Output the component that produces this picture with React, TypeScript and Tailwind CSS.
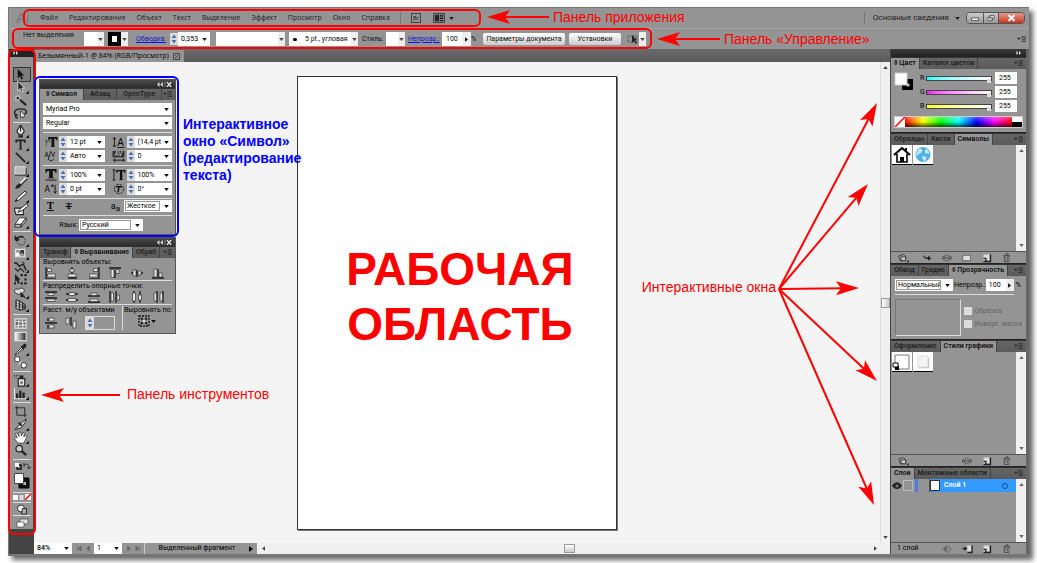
import type { ReactNode } from "react";
import { clsx } from "clsx";

const menu = ["Файл", "Редактирование", "Объект", "Текст", "Выделение", "Эффект", "Просмотр", "Окно", "Справка"];

const light = "#e4e4e4";
const dark = "#222";

type Tool = { name: string; more?: boolean; active?: boolean; art: ReactNode };

const toolGroups: Tool[][] = [
  [
    { name: "Выделение", active: true, art: <path d="M5 1v10l2.500-2.200 1.500 3.700 1.600-.8-1.600-3.500h3z" fill="#111" /> },
    { name: "Прямое выделение", more: true, art: <path d="M5 0v10.500l2.500-2.200 1.500 3.700 1.800-.8-1.600-3.500h3z" fill={dark} stroke={light} strokeWidth=".9" /> },
    { name: "Волшебная палочка", art: <g stroke={dark}><path d="M7 6l7 6" strokeWidth="2.200" /><path d="M5 1v7M1.500 4.500h7M2.500 2l5 5M7.500 2l-5 5" stroke="#ddd" strokeWidth=".9" /><circle cx="5" cy="4.500" r="1" fill={dark} /></g> },
    { name: "Лассо", art: <g fill="none" stroke={dark} strokeWidth="1.500"><path d="M5 9C-1 8 1 2 8 2s8 4 4 6" /><path d="M4 8c-3 1-1 4 1 4" /><path d="M8 4v8l2-2 1 2 1.500-3z" fill={light} strokeWidth=".7" /></g> },
  ],
  [
    { name: "Перо", more: true, art: <g><path d="M8 0L4 6.500 6 10h4l2-3.500z" fill={light} stroke={dark} strokeWidth="1.200" /><path d="M8 2v5" stroke={dark} strokeWidth="1.200" /><path d="M5.500 11h5v2.500h-5z" fill={dark} /></g> },
    { name: "Текст", more: true, art: <path d="M2.500 1.500h11v4h-1L11.500 3.500H9V11l1.500 1.500H5.500L7 11V3.500H4.500l-1 2h-1z" fill={dark} /> },
    { name: "Отрезок линии", more: true, art: <path d="M3 2l10 10" stroke={dark} strokeWidth="1.800" /> },
    { name: "Прямоугольник", more: true, art: <g><path d="M2 3h11v8H2z" fill="#bbb" stroke={light} /><path d="M2 12h12V4" fill="none" stroke={dark} /></g> },
    { name: "Кисть", art: <g><path d="M14 1L7 8" stroke={light} strokeWidth="2.500" /><path d="M15 2L8 9" stroke={dark} strokeWidth="1.300" /><path d="M7 6.500L4 9l-2 3.500c3 0 6-1 7-4z" fill={dark} /></g> },
    { name: "Карандаш", more: true, art: <g><path d="M13 1L5 8l-3 4.500 4.500-2 8-7z" fill="#f4f4f4" stroke={dark} /><path d="M2 12.500l3-1-1.500-2z" fill={dark} /></g> },
    { name: "Кисть-клякса", art: <g><path d="M1 5.500h10v7H3z" fill={light} stroke={dark} strokeWidth="1.200" /><path d="M15 .5L8 6l-3 4 5-2 6-5z" fill="#fff" stroke={dark} /></g> },
    { name: "Ластик", more: true, art: <g><path d="M7 2h7L8.500 9H2z" fill="#fff" stroke={dark} strokeWidth=".9" /><path d="M2 9h6.500v3H2zM8.500 9L14 2v3.500L8.500 12z" fill="#bbb" stroke={dark} strokeWidth=".9" /></g> },
  ],
  [
    { name: "Поворот", more: true, art: <g fill="none" stroke={dark}><circle cx="8.500" cy="7.500" r="4.500" strokeDasharray="1.500 1" /><path d="M4 7.500A4.500 4.500 0 0 1 11 3.500" strokeWidth="1.800" /><path d="M2 2v4.500h4.500z" fill={dark} /></g> },
    { name: "Масштаб", more: true, art: <g><path d="M2.500 2.500h10v8h-10z" fill="#999" stroke={light} strokeWidth="1.200" /><path d="M3 6h4v4H3z" fill="#fff" /><path d="M7 7l4-3M11 7.500V4H8" stroke={dark} fill="none" strokeWidth="1.200" /></g> },
    { name: "Деформация", more: true, art: <g fill="none" stroke={dark}><path d="M1 4c4-4 4 5 7 2s4 0 6 5" strokeWidth="1.600" /><path d="M2 9l3 3 3-3 4 4M10 2l2 2" strokeWidth="1.200" /></g> },
    { name: "Свободное трансформирование", art: <g fill={dark}><path d="M2 1l6 6H6l1 4-2 .5L4 8 2 9.500z" /><path d="M8 1h2.500v2.500H8zM12 1h2.500v2.500H12zM12 6h2.500v2H12zM12 10h2.500v2.500H12zM8 10h2.500v2.500H8zM1 10h2v2.500H1z" /></g> },
    { name: "Создание фигур", more: true, art: <g><path d="M2 7C0 4 4 2 6 4c3-4 8 0 5 3-3 3-7 2-9 0z" fill={light} stroke={dark} /><path d="M8 5.500v7l2-1 4 2z" fill={dark} /></g> },
    { name: "Сетка перспективы", more: true, art: <g fill="none" stroke={dark}><path d="M3 1l4 1v10l-4-2zM7 2l6 4v5l-6 1M3 4l10 4M3 7l10 2.500M10 4v7" /><path d="M5 2v8.500M8.500 4v7" stroke={light} /></g> },
  ],
  [
    { name: "Сетка", art: <g><path d="M2 2h12v10H2z" fill="#666" stroke={light} strokeWidth="1.200" /><path d="M2 5c4-2 5 2 12 0M2 9c4 2 7-2 12 0M6 2c2 3-2 6 0 10M10 2c-1 4 2 6 0 10" fill="none" stroke={light} strokeWidth="1.200" /></g> },
    { name: "Градиент", art: <rect x="2" y="2.500" width="12" height="9" fill="url(#toolGrad)" stroke={light} strokeWidth="1.200" /> },
    { name: "Пипетка", more: true, art: <g><path d="M9 5L3 11l-1 2 2-1 6.500-6z" fill="#fff" stroke={dark} /><path d="M8 3.500l2-.5 2-2.500 2.500 1.500-1 3L11.500 6v2z" fill={dark} /></g> },
    { name: "Переход", art: <g><path d="M2 1h5v5H2z" fill="#fff" stroke={dark} strokeWidth=".8" /><path d="M6 6h4v4H6z" fill="#bbb" /><circle cx="11.500" cy="10" r="3" fill="#fff" stroke={dark} /></g> },
  ],
  [
    { name: "Распыление символов", more: true, art: <g><path d="M1 1.500h6M1 3.500h4" stroke={dark} strokeDasharray="1 1" /><path d="M5.500 5h7v8h-7z" fill={light} stroke={dark} strokeWidth="1.200" /><path d="M7 1.500h4V5H7z" fill={dark} /><path d="M7.500 8h3v2.500h-3z" fill="#777" /></g> },
    { name: "Гистограмма", more: true, art: <g><path d="M1.500 1v11.500H14" fill="none" stroke={light} strokeWidth="1.200" /><path d="M3 7h2.500v5H3zM6.500 4H9v8H6.500zM10 6h2.500v6H10z" fill={dark} /></g> },
  ],
  [
    { name: "Монтажная область", art: <path d="M4 3h8.500v8H4zM2 3h2M12.500 11h2M4 1v2M12.500 11v2" fill="none" stroke={dark} /> },
    { name: "Фрагменты", more: true, art: <g><path d="M14 1L8 6l-6 6.500 7-2 4-6z" fill={light} stroke={dark} /><path d="M6 5l3.500 3.500" stroke={dark} strokeWidth="2" /></g> },
    { name: "Рука", more: true, art: <path d="M5 13L1.500 8l1-1.500 2 1L2.500 3 4 2l2.500 4L6 1.500 8 1l1 4.500L10.500 1.500l1.500.5-.5 4.500 2-2L15 5.500 11.500 13z" fill="#fff" stroke={dark} strokeWidth=".7" /> },
    { name: "Лупа", art: <g><circle cx="6.500" cy="5" r="3.500" fill="#ccc" stroke={dark} strokeWidth="1.300" /><path d="M9 7.500l5 4.500" stroke={dark} strokeWidth="2.600" /></g> },
  ],
];

const bars = (d: string) => <path d={d} fill={light} stroke="#333" strokeWidth=".7" />;
const rail = (d: string) => <path d={d} stroke="#1a1a1a" strokeWidth="1.300" fill="none" />;

const alignIcons = [
  { name: "По левому краю", art: <>{rail("M2 1v12h10")}{bars("M3.500 2.500h4v3h-4zM3.500 8h8v3h-8z")}</> },
  { name: "По центру горизонтали", art: <>{rail("M7 0v14M3 12h9")}{bars("M5 3h4v3H5zM3 8h8v3H3z")}</> },
  { name: "По правому краю", art: <>{rail("M12 1v12H2")}{bars("M6.500 2.500h4v3h-4zM2.500 8h8v3h-8z")}</> },
  { name: "По верхнему краю", art: <>{rail("M1 2h12M7 4v8")}{bars("M3 3.500h3v8H3zM8 3.500h3v4H8z")}</> },
  { name: "По центру вертикали", art: <>{rail("M1 7h12M7 4v7")}{bars("M3 4h3v6H3zM8 5h3v4H8z")}</> },
  { name: "По нижнему краю", art: <>{rail("M1 12h12M7 3v8")}{bars("M3 3h3v8H3zM8 7h3v4H8z")}</> },
];
const spreadIcons = [
  { name: "Верхние края", art: <>{rail("M1 2h12M1 8h12")}{bars("M4 3h6v2.500H4zM3 9h8v2.500H3z")}</> },
  { name: "Центры по вертикали", art: <>{rail("M1 4h12M1 10h12")}{bars("M4 2.500h6v3H4zM3 8.500h8v3H3z")}</> },
  { name: "Нижние края", art: <>{rail("M1 6h12M1 12h12")}{bars("M4 3h6v2.500H4zM3 9h8v2.500H3z")}</> },
  { name: "Левые края", art: <>{rail("M2 1v12M8 1v12")}{bars("M3 3h2.500v8H3zM9 5h2.500v5H9z")}</> },
  { name: "Центры по горизонтали", art: <>{rail("M4 1v12M10 1v12")}{bars("M2.500 3h3v8h-3zM8.500 5h3v5h-3z")}</> },
  { name: "Правые края", art: <>{rail("M6 1v12M12 1v12")}{bars("M3 3h2.500v8H3zM9 3h2.500v8H9z")}</> },
];

function IconButton({ name, art }: { name: string; art: ReactNode }) {
  return (
    <button aria-label={name} className="flex">
      <svg viewBox="1 1 12 12" className="h-3 w-3">{art}</svg>
    </button>
  );
}

function Down({ className }: { className?: string }) {
  return (
    <svg viewBox="0 0 6 4" className={clsx("h-[3px] w-[5px] shrink-0", className)}>
      <path d="M0 0h6L3 4z" fill="currentColor" />
    </svg>
  );
}

function Combo({ label, value, className, boxed }: { label: string; value: string; className?: string; boxed?: boolean }) {
  return (
    <div className={clsx("relative flex items-center bg-white", className)}>
      <select aria-label={label} className="h-full w-full min-w-0 appearance-none pr-2 pl-[3px] text-black outline-none">
        <option>{value}</option>
      </select>
      {boxed && <span className="pointer-events-none absolute inset-y-px right-3 left-px border border-[#999]" />}
      <Down className="pointer-events-none absolute right-[3px]" />
    </div>
  );
}

function Spin() {
  return (
    <svg viewBox="0 0 8 12" className="h-3 w-2 shrink-0">
      <rect width="8" height="12" fill="#dcdcdc" />
      <path d="M1.500 5L4 1.500 6.500 5zM1.500 7L4 10.500 6.500 7z" fill="#4a6fb5" />
    </svg>
  );
}

function Field({ label, value, art }: { label: string; value: string; art: ReactNode }) {
  return (
    <div className="flex items-center">
      <svg viewBox="0 0 16 13" className="h-3 w-4 shrink-0">{art}</svg>
      <Spin />
      <Combo label={label} value={value} className="h-3 min-w-0 flex-1" />
    </div>
  );
}

function Flyout() {
  return (
    <button aria-label="Меню панели" className="ml-auto shrink-0 pr-[3px] pl-px">
      <svg viewBox="0 0 10 8" className="h-[7px] w-[9px]">
        <path d="M0 2h4L2 4.500z" fill={dark} />
        <path d="M5 1h5M5 3.500h5M5 6h5" stroke={dark} />
      </svg>
    </button>
  );
}

function Tabs({ items, active, wide }: { items: string[]; active: number; wide?: boolean }) {
  return (
    <div className="flex h-3 items-center border-t border-[#333] bg-gradient-to-b from-[#666] to-[#5a5a5a] text-[7px] font-semibold">
      <div role="tablist" className="flex h-full min-w-0">
        {items.map((t, i) => (
          <button
            key={t}
            role="tab"
            aria-selected={i === active}
            className={clsx(
              "h-full border-r border-[#444] leading-[11px] whitespace-nowrap",
              wide ? "px-[6px]" : "px-[3px]",
              i === active ? "bg-[#949494] text-[#111]" : "text-[#222]"
            )}
          >
            {t}
          </button>
        ))}
      </div>
      <Flyout />
    </div>
  );
}

function FloatHeader() {
  return (
    <div className="flex h-2 items-center justify-end bg-gradient-to-b from-[#4a4a4a] to-[#2c2c2c] pr-[3px]">
      <svg viewBox="0 0 18 6" className="h-[5px] w-[15px]">
        <path d="M3 0L0 3l3 3zM7 0L4 3l3 3z" fill="#ddd" />
        <path d="M9.500 0v6" stroke="#888" />
        <path d="M12 0l5 6M17 0l-5 6" stroke="#eee" strokeWidth="1.500" />
      </svg>
    </div>
  );
}

function Rule({ className }: { className?: string }) {
  return <hr className={clsx("border-0 border-t border-[#ddd]", className)} />;
}

function SymbolPanel() {
  return (
    <section className="w-[137px] border border-[#555] bg-[#949494] text-[7px]">
      <FloatHeader />
      <Tabs items={["◊ Символ", "Абзац", "OpenType"]} active={0} wide />
      <div className="flex flex-col p-[3px]">
        <Combo label="Шрифт" value="Myriad Pro" className="h-3" />
        <Combo label="Начертание" value="Regular" className="mt-[2px] h-3" />
        <Rule className="my-[3px]" />
        <div className="grid grid-cols-2 gap-x-[6px] gap-y-[2px]">
          <Field label="Кегль" value="12 pt" art={<><path d="M5 1h10v3.500h-1l-1-1.500h-1.500v8l1.500 1H7l1.500-1V3H7L6 4.500H5z" fill="#111" /><path d="M2 6h5M3 4v8" stroke={dark} strokeDasharray="1 1" /></>} />
          <Field label="Интерлиньяж" value="(14,4 pt" art={<><text x="6" y="11" fontSize="11">A</text><path d="M3 2v9M1.500 3.500L3 1.500l1.500 2M1.500 10L3 12l1.500-2M6 12.500h8" stroke="#111" fill="none" /></>} />
          <Field label="Кернинг" value="Авто" art={<><text x="1" y="8" fontSize="7">A</text><text x="8" y="8" fontSize="7">V</text><path d="M8 1L5 10l3 2 3-2" fill="none" stroke="#111" strokeWidth=".9" /></>} />
          <Field label="Трекинг" value="0" art={<><path d="M1 1h13v7H1z" fill="#333" /><text x="3" y="7" fontSize="7" fill="#ddd">AV</text><path d="M2 11h12M4 9l-2 2 2 2M12 9l2 2-2 2" stroke="#111" fill="none" /></>} />
        </div>
        <Rule className="my-[3px]" />
        <div className="grid grid-cols-2 gap-x-[6px] gap-y-[2px]">
          <Field label="Масштаб по горизонтали" value="100%" art={<><path d="M2 0h12v4h-1l-1.500-2H10v7l1.500 1h-7L6 9V2H4.500L3 4H2z" fill="#111" /><path d="M2 12h12" stroke="#111" /></>} />
          <Field label="Масштаб по вертикали" value="100%" art={<><path d="M5 1h10v3h-1l-1-1.500h-1.500v8.500l1.500 1H7.500L9 11V2.500H7L6 4H5z" fill="#111" /><path d="M2.500 1v11M1 1h3M1 12h3" stroke="#111" /></>} />
          <Field label="Сдвиг базовой линии" value="0 pt" art={<><text x="1" y="10" fontSize="9">A</text><path d="M8 3h3M9.500 1.500v3M12.500 2v9M11 9l1.500 2L14 9" stroke="#111" fill="none" /></>} />
          <Field label="Поворот символа" value="0°" art={<><circle cx="8" cy="6.500" r="5" fill="none" stroke="#111" strokeDasharray="2 1" /><path d="M5 4h6M8 4l-1 6" stroke="#111" strokeWidth="1.600" /></>} />
        </div>
        <Rule className="mt-[3px] mb-px" />
        <div className="flex items-center">
          <button aria-label="Подчеркнутый" className="ml-1 font-['Liberation_Serif',serif] text-[10px] leading-3 font-bold underline">T</button>
          <button aria-label="Зачеркнутый" className="ml-3 font-['Liberation_Serif',serif] text-[9px] leading-3 font-bold line-through">T</button>
          <span className="mr-1 ml-auto text-[9px] leading-3">a<sub className="text-[8px]">a</sub></span>
          <Combo label="Сглаживание" value="Жесткое" className="h-3 w-12" boxed />
        </div>
        <Rule className="my-[3px]" />
        <label className="flex items-center pl-4">
          <span className="mr-px">Язык:</span>
          <Combo label="Язык" value="Русский" className="h-3 w-16" boxed />
        </label>
      </div>
    </section>
  );
}

function AlignPanel() {
  return (
    <section className="w-[137px] border border-[#555] bg-[#949494] text-[7px]">
      <FloatHeader />
      <Tabs items={["Трансф", "◊ Выравнивание", "Обраб"]} active={1} />
      <div className="flex flex-col px-[3px] pb-[3px]">
        <h3 className="leading-2">Выровнять объекты:</h3>
        <div className="mt-px flex justify-between pr-2 pl-[2px]">{alignIcons.map((i) => <IconButton key={i.name} {...i} />)}</div>
        <Rule className="my-px" />
        <h3 className="leading-2">Распределить опорные точки:</h3>
        <div className="mt-px flex justify-between pr-2 pl-[2px]">{spreadIcons.map((i) => <IconButton key={i.name} {...i} />)}</div>
        <Rule className="my-px" />
        <div className="flex">
          <div className="w-20 border-r border-[#ddd]">
            <h3 className="leading-2 whitespace-nowrap">Расст. м/у объектами</h3>
            <div className="mt-[2px] flex items-center gap-2 pl-[2px]">
              <IconButton name="Интервал по вертикали" art={<>{rail("M1 7h12M4 2v3M4 9v4")}{bars("M5 2h5v3H5zM5 9h5v3H5z")}</>} />
              <IconButton name="Интервал по горизонтали" art={<>{rail("M7 1v9")}{bars("M2 2h3v6H2zM9 5h3v7H9z")}</>} />
              <div className="flex border border-[#ddd]">
                <Spin />
                <input aria-label="Интервал" className="w-5 bg-[#949494]" />
              </div>
            </div>
          </div>
          <div className="min-w-0 flex-1 pl-px">
            <h3 className="leading-2 whitespace-nowrap">Выровнять по:</h3>
            <button aria-label="Выровнять по" className="mt-px ml-[14px] flex items-center gap-px">
              <svg viewBox="0 0 12 12" className="h-3 w-3">
                <path d="M1 1h10v10H1z" fill="none" stroke="#111" strokeWidth="1.300" strokeDasharray="2 1" />
                <path d="M3 3l6 6M9 3l-6 6" stroke="#111" strokeWidth="1.800" />
                <path d="M4.500 4.500h3v3h-3z" fill={light} />
              </svg>
              <Down />
            </button>
          </div>
        </div>
      </div>
    </section>
  );
}

function Toolbar() {
  return (
    <aside className="flex w-[25px] shrink-0 flex-col bg-[#444]">
      <div className="flex h-2 items-center bg-[#222] pl-1">
        <svg viewBox="0 0 8 6" className="h-1 w-[6px]"><path d="M0 0l3 3-3 3zM4 0l3 3-3 3z" fill="#ddd" /></svg>
      </div>
      <div className="mx-px flex flex-col items-center bg-[#949494] pt-[11px]">
        <svg className="absolute h-0 w-0">
          <linearGradient id="toolGrad"><stop stopColor="#fff" /><stop offset="1" stopColor="#222" /></linearGradient>
        </svg>
        {toolGroups.map((group, i) => (
          <div key={i} className="flex flex-col items-center">
            {group.map((t) => (
              <button
                key={t.name}
                aria-label={t.name}
                className={clsx("flex h-[13px] w-4 items-center justify-center", t.active && "bg-[#7d7d7d] outline outline-[#333]")}
              >
                <svg viewBox="1 0 16 14" className="h-[13px] w-[15px]">
                  {t.art}
                  {t.more && <path d="M17 10.500V14h-3.500z" fill="#111" />}
                </svg>
              </button>
            ))}
            <Rule className="my-[2px] w-[18px]" />
          </div>
        ))}
        <svg viewBox="0 0 18 8" className="h-2 w-[18px]">
          <path d="M4 3h4v4H4z" fill="none" stroke="#111" strokeWidth="1.500" />
          <path d="M2 1h4v4H2z" fill="#fff" />
          <path d="M11 3c4-2 5 0 5 3M11 1v4M14 5l2 2 2-2" fill="none" stroke="#333" />
        </svg>
        <button aria-label="Заливка и обводка" className="my-[2px] flex">
          <svg viewBox="0 0 18 18" className="h-[18px] w-[18px]">
            <path d="M6 6h10v10H6z" fill="#111" stroke="#000" />
            <path d="M10.500 10.500h2v2h-2z" fill="#999" stroke="#ccc" />
            <path d="M1.500 1.500h9v10h-9z" fill="#fff" stroke="#444" />
          </svg>
        </button>
        <Rule className="w-[18px]" />
        <svg viewBox="0 0 18 7" className="my-px h-[7px] w-[18px]">
          <path d="M0 1h5v5H0z" fill="#fff" />
          <path d="M6.500 1h4v5h-4z" fill="#ddd" />
          <path d="M12 0h6v6h-6z" fill="#fff" />
          <path d="M12 6l6-6" stroke="red" strokeWidth="1.500" />
        </svg>
        <Rule className="w-[18px]" />
        <svg viewBox="0 0 14 12" className="h-3 w-[14px]">
          <circle cx="6" cy="5.500" r="3.500" fill="#f4f4f4" stroke="#333" />
          <path d="M7.500 5.500h4V11H6.500z" fill="#aaa" stroke="#222" strokeWidth=".9" />
        </svg>
        <Rule className="w-[18px]" />
        <svg viewBox="0 0 14 12" className="mt-px h-3 w-[14px]">
          <path d="M5 2h8v5H5z" fill={light} stroke="#444" strokeWidth=".7" />
          <path d="M2 5h7v5H2z" fill="#fff" stroke="#444" strokeWidth=".7" />
        </svg>
      </div>
    </aside>
  );
}

function VScroll() {
  return (
    <div className="flex w-[10px] shrink-0 flex-col items-center justify-between bg-[#f0f0f0] py-1 text-[#666]">
      <Down className="rotate-180" />
      <Down />
    </div>
  );
}

const footArt: Record<string, ReactNode> = {
  library: <><path d="M2 4l6-2 3 3v5H4z" fill="#aaa" stroke="#222" /><path d="M5 5h6v5H5z" fill="#ccc" stroke="#222" /><path d="M15 9v3h-3z" fill="#111" /></>,
  place: <path d="M2 3c3 3 5 3 7 3V3l4 4-4 3V8C6 8 3 7 2 3z" fill="#222" />,
  unlink: <path d="M5 5H2v3h3M9 5h4v3H9M4 6.500h6M5 2l1 2M9 2L8 4M5 11l1-2M9 11L8 9" fill="none" stroke="#333" />,
  options: <path d="M2 3h10v7H2z" fill="#ddd" stroke="#555" />,
  fresh: <><path d="M3 2h8v8H3z" fill="#ddd" /><path d="M12 2v9H3M3 7h3v3" fill="none" stroke="#222" strokeWidth="1.800" /></>,
  trash: <><path d="M4 4h6v7H4z" fill="#bbb" stroke="#333" /><path d="M3 3h8M6 1h3M6 5v5M8 5v5" stroke="#333" /></>,
  locate: <><circle cx="8" cy="6.500" r="4" fill="none" stroke="#444" strokeDasharray="3 1" /><path d="M2 6.500h6M6 4l2 2.500L6 9" fill="none" stroke="#444" /></>,
  sub: <><path d="M1 6h6M4 4l3 2-3 2" fill="#111" stroke="#111" /><path d="M8 2h6v8H8z" fill="#ddd" /><path d="M14 2v9H8" fill="none" stroke="#222" strokeWidth="1.800" /></>,
};

function PanelFoot({ items, text }: { items: [string, string][]; text?: string }) {
  return (
    <div className="flex h-3 shrink-0 items-center gap-2 border-t border-[#555] pr-[13px] pl-[6px] text-[7px]">
      {text && <span className="whitespace-nowrap">{text}</span>}
      {items.map(([key, name], i) => (
        <button key={key} aria-label={name} className={clsx("flex", (text ? i === 0 : i === 1) && "ml-auto")}>
          <svg viewBox="0 0 15 13" className="h-[10px] w-3">{footArt[key]}</svg>
        </button>
      ))}
    </div>
  );
}

const channels = [
  { name: "R", track: "bg-gradient-to-r from-[#00ffff] to-white" },
  { name: "G", track: "bg-gradient-to-r from-[#ff00ff] to-white" },
  { name: "B", track: "bg-gradient-to-r from-[#ffff00] to-white" },
];

function Dock() {
  return (
    <aside className="flex w-[139px] shrink-0 flex-col border-r-3 border-l border-r-[#666] border-l-[#444] bg-[#949494]">
      <div className="flex h-2 shrink-0 items-center justify-end bg-gradient-to-b from-[#3a3a3a] to-[#222] pr-1">
        <svg viewBox="0 0 8 6" className="h-1 w-[6px]"><path d="M0 0l3 3-3 3zM4 0l3 3-3 3z" fill="#ddd" /></svg>
      </div>

      <Tabs items={["◊ Цвет", "Каталог цветов"]} active={0} />
      <div className="flex flex-col px-[3px] pt-[3px] pb-1">
        <div className="flex gap-[6px]">
          <svg viewBox="0 0 20 20" className="h-5 w-5">
            <path d="M8 7h11v11H8z" fill="#000" />
            <path d="M13 12h2v2h-2z" fill="#999" stroke="#ccc" />
            <path d="M1 1h12v12H1z" fill="#fff" stroke="#ccc" />
          </svg>
          <div className="flex flex-1 flex-col gap-[2px]">
            {channels.map((c) => (
              <label key={c.name} className="flex items-center text-[7px]">
                <span className="w-[6px]">{c.name}</span>
                <input
                  type="range"
                  min={0}
                  max={255}
                  defaultValue={255}
                  className={clsx(
                    "h-[5px] w-0 min-w-0 flex-1 appearance-none border border-[#444] [&::-webkit-slider-thumb]:h-1 [&::-webkit-slider-thumb]:w-1 [&::-webkit-slider-thumb]:translate-y-[3px] [&::-webkit-slider-thumb]:appearance-none [&::-webkit-slider-thumb]:bg-[#ddd]",
                    c.track
                  )}
                />
                <input aria-label={"Значение " + c.name} defaultValue="255" className="mr-[6px] ml-[3px] h-3 w-[22px] bg-white pl-1 text-[7px]" />
              </label>
            ))}
          </div>
        </div>
        <div className="mt-1 flex h-3 border border-[#ccc]">
          <svg viewBox="0 0 10 10" className="h-full w-[10px] bg-white"><path d="M0 10L10 0" stroke="red" strokeWidth="1.500" /></svg>
          <div className="flex-1 bg-[linear-gradient(to_bottom,rgba(255,255,255,0.3),transparent_50%,rgba(0,0,0,0.7)),linear-gradient(to_right,red,yellow,lime,cyan,blue,magenta,red)]" />
          <div className="w-[10px] bg-gradient-to-b from-white from-50% to-black to-50%" />
        </div>
      </div>

      <div className="border-t border-[#222]"><Tabs items={["Образцы", "Кисти", "Символы"]} active={2} /></div>
      <div className="flex h-[106px] shrink-0">
        <div className="flex flex-1 gap-px pl-px">
          <button aria-label="Дом" className="h-5 w-5 border-b border-black bg-white">
            <svg viewBox="0 0 20 20"><path d="M2 10l8-7 8 7M14 3v3" fill="none" stroke="#000" strokeWidth="2" /><path d="M5 9v8h10V9" fill="none" stroke="#000" strokeWidth="1.600" /><path d="M8 12h4v5H8z" fill="#000" /></svg>
          </button>
          <button aria-label="Глобус" className="h-5 w-5 border-b border-black bg-white">
            <svg viewBox="0 0 20 20"><circle cx="10" cy="9.500" r="7.500" fill="#4fb0e4" /><path d="M5 5c3-3 5 0 4 2s-4 1-4 3-2 0-2-1zM12 4c3 0 5 3 4 5l-4-1zM9 11l5 1-2 4c-3 0-2-3-3-5z" fill="#c9e8f7" /></svg>
          </button>
        </div>
        <VScroll />
      </div>
      <PanelFoot items={[["library", "Библиотеки"], ["place", "Поместить"], ["unlink", "Разорвать связь"], ["options", "Параметры"], ["fresh", "Новый символ"], ["trash", "Удалить"]]} />

      <div className="border-t border-[#222]"><Tabs items={["Обвод", "Градие", "◊ Прозрачность"]} active={2} /></div>
      <div className="flex flex-col px-1 py-[3px] text-[7px]">
        <div className="flex items-center">
          <Combo label="Режим" value="Нормальный" className="h-3 w-[58px]" boxed />
          <label className="ml-px flex flex-1 items-center">
            Непрозр.:
            <input defaultValue="100" className="ml-auto h-3 w-5 bg-white pl-[3px]" />
          </label>
          <button aria-label="Ползунок" className="flex h-3 w-2 items-center justify-center bg-[#eee]"><Down className="-rotate-90" /></button>
          <span className="mr-px ml-[2px]">%</span>
        </div>
        <Rule className="mt-[3px] mr-2" />
        <div className="mt-1 flex items-center">
          <div className="h-[37px] w-[77px] border border-[#ddd] border-t-[#777] border-l-[#777]" />
          <div className="flex flex-col gap-[3px] pl-[3px] text-[#666]">
            <label className="flex items-center gap-[2px] whitespace-nowrap"><input type="checkbox" className="h-2 w-2 appearance-none bg-[#ddd]" />Обрезка</label>
            <label className="flex items-center gap-[2px] whitespace-nowrap"><input type="checkbox" className="h-2 w-2 appearance-none bg-[#ddd]" />Инверт. маска</label>
          </div>
        </div>
      </div>

      <div className="border-t border-[#222]"><Tabs items={["Оформление", "Стили графики"]} active={1} /></div>
      <div className="flex h-[102px] shrink-0">
        <div className="flex flex-1 gap-px pl-px">
          <button aria-label="Стиль по умолчанию" className="h-5 w-5 border-b border-black bg-white">
            <svg viewBox="0 0 20 20"><path d="M3 3h14v14H3z" fill="none" stroke="#777" /><path d="M3 14h4v4H3z" fill="#000" /><path d="M1 11h5v4H1z" fill="#fff" stroke="#000" /></svg>
          </button>
          <button aria-label="Тень" className="h-5 w-5 border-b border-black bg-white">
            <svg viewBox="0 0 20 20"><path d="M6 15.500h9.500V6" fill="none" stroke="#bbb" strokeWidth="1.500" /><path d="M5 4h10v11H5z" fill="#f4f4f4" stroke="#ddd" /></svg>
          </button>
        </div>
        <VScroll />
      </div>
      <PanelFoot items={[["library", "Библиотеки"], ["unlink", "Разорвать связь"], ["fresh", "Новый стиль"], ["trash", "Удалить"]]} />

      <div className="border-t border-[#222]"><Tabs items={["Слои", "Монтажные области"]} active={0} /></div>
      <div className="flex min-h-0 flex-1">
        <div className="flex-1">
          <div className="flex h-[13px] items-stretch text-[7px] font-semibold text-white">
            <button aria-label="Видимость" className="flex w-3 items-center justify-center">
              <svg viewBox="0 0 10 8" className="h-2 w-[10px]"><path d="M0 4c3-5 7-5 10 0-3 4-7 4-10 0z" fill="#222" /><circle cx="5" cy="4" r="1.500" fill="#777" /></svg>
            </button>
            <span className="my-px w-[10px] border border-[#bbb]" />
            <span className="ml-[2px] w-[3px] bg-[#4a7de8]" />
            <span className="w-3 border-r border-[#555]" />
            <div className="flex flex-1 items-center bg-[#3399ff]">
              <span className="h-[11px] w-[10px] border border-[#333] bg-white" />
              <span className="ml-1">Слой 1</span>
              <span className="mr-2 ml-auto h-[6px] w-[6px] rounded-full border border-[#0b4b93]" />
            </div>
          </div>
        </div>
        <VScroll />
      </div>
      <PanelFoot text="1 слой" items={[["locate", "Создать обтравочную маску"], ["sub", "Новый подслой"], ["fresh", "Новый слой"], ["trash", "Удалить"]]} />
    </aside>
  );
}

function SmallDrop({ label }: { label: string }) {
  return (
    <button aria-label={label} className="flex h-[14px] w-[7px] shrink-0 items-center justify-center bg-[#eee] text-[#444]">
      <Down />
    </button>
  );
}

function ControlBar() {
  return (
    <div className="flex h-[21px] shrink-0 items-center border-t border-[#a5a5a5] bg-[#949494] text-[7px] whitespace-nowrap text-[#111]">
      <span className="w-[60px] pb-2 pl-[14px]">Нет выделения</span>
      <span className="ml-[15px] h-[14px] w-[13px] bg-white" />
      <SmallDrop label="Заливка" />
      <span className="ml-1 h-[14px] w-[13px] border-4 border-black bg-white" />
      <SmallDrop label="Обводка" />
      <a href="#stroke" className="ml-2 w-[34px] text-[#11d] underline">Обводка:</a>
      <Spin />
      <Combo label="Толщина" value="0,353" className="h-[14px] w-8" />
      <span className="ml-[6px] h-[14px] w-[62px] bg-white" />
      <SmallDrop label="Профиль" />
      <span className="ml-1 flex h-[14px] w-[62px] items-center gap-2 bg-white pl-1">
        <i className="h-[3px] w-1 rounded-full bg-black" />
        5 pt., угловая
      </span>
      <SmallDrop label="Кисть" />
      <span className="ml-1 w-[24px]">Стиль:</span>
      <span className="h-[14px] w-3 bg-white" />
      <SmallDrop label="Стиль" />
      <a href="#opacity" className="ml-[3px] w-[34px] text-[#11d] underline">Непрозр.:</a>
      <input aria-label="Непрозрачность" defaultValue="100" className="h-[14px] w-5 bg-white pl-1" />
      <button aria-label="Ползунок" className="flex h-[14px] w-[9px] items-center justify-center bg-[#eee]"><Down className="-rotate-90" /></button>
      <span className="w-3">%</span>
      <button className="h-3 w-[82px] rounded-xs bg-gradient-to-b from-white to-[#ccc]">Параметры документа</button>
      <button className="ml-1 h-3 w-[52px] rounded-xs bg-gradient-to-b from-white to-[#ccc]">Установки</button>
      <svg viewBox="0 0 12 12" className="ml-[6px] h-3 w-3">
        <path d="M1 3h9v6H1z" fill="none" stroke="#333" strokeDasharray="1 1.500" />
        <path d="M5 2v8l2-2 2 3 1-1-2-3h2z" fill="#222" />
      </svg>
      <SmallDrop label="Выделить" />
      <Flyout />
    </div>
  );
}

function AppBar() {
  return (
    <header className="flex h-[21px] shrink-0 items-center border-t border-[#777] bg-[#949494] text-[8px] text-[#1c1c1c]">
      <span className="w-[31px] pl-[7px] font-['Liberation_Sans',sans-serif] text-[15px] text-[#777]">Ai</span>
      <nav className="flex gap-[11px] font-['Open_Sans',sans-serif] text-[7px] font-medium">
        {menu.map((m) => <button key={m}>{m}</button>)}
      </nav>
      <span className="ml-[10px] h-3 w-px bg-[#777]" />
      <button aria-label="Bridge" className="ml-[10px] h-[10px] w-[10px] border border-[#444] text-[6px] leading-[8px]">Br</button>
      <button aria-label="Упорядочить документы" className="ml-3 flex items-center gap-1">
        <svg viewBox="0 0 12 10" className="h-[10px] w-3">
          <path d="M.5.5h11v9H.5z" fill="#777" stroke="#444" />
          <path d="M2 2h4v6H2zM7 2h3v1.500H7zM7 4.500h3v1.500H7zM7 7h3v1H7z" fill="#222" />
        </svg>
        <Down />
      </button>
      <span className="ml-auto h-3 w-px bg-[#777]" />
      <button className="ml-2 flex items-center gap-[6px]">Основные сведения <Down /></button>
      <div className="mr-1 ml-[6px] flex h-3 overflow-hidden rounded-sm border border-[#555]">
        <button aria-label="Свернуть" className="w-4 bg-gradient-to-b from-[#ccc] to-[#999]">
          <svg viewBox="0 0 16 9" className="h-full w-full"><path d="M4.500 4.500h7v2.500h-7z" fill="#fff" stroke="#444" strokeWidth=".8" /></svg>
        </button>
        <button aria-label="Развернуть" className="w-4 border-x border-[#555] bg-gradient-to-b from-[#ccc] to-[#999]">
          <svg viewBox="0 0 16 9" className="h-full w-full"><path d="M6.500 1.500h5v4h-5zM4.500 3.500h5v4h-5z" fill="#fff" stroke="#444" strokeWidth=".9" /></svg>
        </button>
        <button aria-label="Закрыть" className="w-[25px] bg-gradient-to-b from-[#e39a8c] to-[#c4301a]">
          <svg viewBox="0 0 25 9" className="h-full w-full"><path d="M9.500 1.500l6 6M15.500 1.500l-6 6" stroke="#fff" strokeWidth="2" /></svg>
        </button>
      </div>
    </header>
  );
}

function StatusBar() {
  return (
    <div className="flex h-[11px] shrink-0 items-stretch bg-[#f0f0f0] text-[7px] leading-[11px]">
      <Combo label="Масштаб" value="84%" className="w-[38px] font-medium" />
      <div className="flex w-[22px] items-center justify-around bg-[#949494]">
        <svg viewBox="0 0 16 6" className="h-[5px] w-[15px]"><path d="M1 0v6M5 0L2 3l3 3zM15 0l-3 3 3 3z" stroke="#666" fill="#666" /></svg>
      </div>
      <Combo label="Страница" value="1" className="w-7" />
      <div className="flex w-[22px] items-center justify-around bg-[#949494]">
        <svg viewBox="0 0 16 6" className="h-[5px] w-[15px]"><path d="M1 0l3 3-3 3zM15 0v6M11 0l3 3-3 3z" stroke="#666" fill="#666" /></svg>
      </div>
      <button className="flex w-[113px] items-center border-l border-[#ccc] bg-[#949494] pr-1">
        <span className="flex-1">Выделенный фрагмент</span>
        <svg viewBox="0 0 4 6" className="h-[6px] w-1"><path d="M0 0l4 3-4 3z" /></svg>
      </button>
      <div className="flex flex-1 items-center justify-between bg-[#f0f0f0] pr-3 pl-1 text-[#444]">
        <Down className="rotate-90" />
        <span className="h-[9px] w-[11px] border border-[#999] bg-gradient-to-b from-white to-[#ccc]" />
        <Down className="-rotate-90" />
      </div>
    </div>
  );
}

function Arrow({ from, to }: { from: [number, number]; to: [number, number] }) {
  const angle = (Math.atan2(to[1] - from[1], to[0] - from[0]) * 180) / Math.PI;
  const length = Math.hypot(to[0] - from[0], to[1] - from[1]);
  return (
    <g transform={`translate(${to[0]} ${to[1]}) rotate(${angle})`}>
      <path d={`M${-length} 0H-15`} stroke="red" strokeWidth="2" />
      <path d="M0 0l-23-7 5 7-5 7z" fill="red" />
    </g>
  );
}

function Notes() {
  return (
    <div className="pointer-events-none absolute inset-0 font-['Liberation_Sans',sans-serif] text-[14px] leading-4 whitespace-nowrap text-[#f00]">
      <div className="absolute top-[9px] left-[23px] h-[18px] w-[458px] rounded-md border-2 border-[#f00]" />
      <div className="absolute top-[28px] left-[12px] h-[21px] w-[640px] rounded-md border-2 border-[#f00]" />
      <div className="absolute top-[49px] left-[8px] h-[486px] w-[28px] rounded-md border-2 border-[#f00]" />
      <div className="absolute top-[76px] left-[34px] h-[161px] w-[145px] rounded-md border-2 border-[#00f]" />
      <svg className="absolute top-0 left-0 h-[420px] w-[730px]">
        <Arrow from={[549, 17]} to={[487, 17]} />
        <Arrow from={[720, 39]} to={[657, 39]} />
        <Arrow from={[120, 395]} to={[41, 395]} />
      </svg>
      <svg viewBox="0 0 110 420" className="absolute top-[95px] right-[152px] h-[420px] w-[110px]">
        <Arrow from={[4, 194]} to={[102, 8]} />
        <Arrow from={[4, 194]} to={[93, 89]} />
        <Arrow from={[4, 194]} to={[84, 193]} />
        <Arrow from={[4, 194]} to={[102, 286]} />
        <Arrow from={[4, 194]} to={[99, 410]} />
      </svg>
      <p className="absolute top-[9px] left-[553px]">Панель приложения</p>
      <p className="absolute top-[31px] left-[724px]">Панель «Управление»</p>
      <p className="absolute top-[386px] left-[127px]">Панель инструментов</p>
      <p className="absolute top-[279px] right-[261px]">Интерактивные окна</p>
      <p className="absolute top-[116px] left-[183px] leading-[17px] font-bold text-[#00f]">
        Интерактивное<br />окно «Символ»<br />(редактирование<br />текста)
      </p>
    </div>
  );
}

export default function App() {
  return (
    <div className="relative flex h-screen min-h-[563px] flex-col bg-white px-2 pt-[7px] pb-[7px] font-[Roboto,'Noto_Sans',sans-serif]">
      <main className="flex min-h-0 flex-1 flex-col border-b-2 border-l border-[#777] shadow-[4px_4px_5px_rgba(0,0,0,0.6)]">
        <AppBar />
        <ControlBar />
        <div className="flex min-h-0 flex-1">
          <Toolbar />
          <div className="flex min-w-0 flex-1 flex-col">
            <div className="flex h-[13px] shrink-0 items-end bg-gradient-to-b from-[#6a6a6a] to-[#5a5a5a]">
              <div className="flex h-3 items-center gap-1 bg-[#949494] px-1 font-['Open_Sans',sans-serif] text-[7px] font-medium whitespace-nowrap">
                Безымянный-1 @ 84% (RGB/Просмотр)
                <button aria-label="Закрыть документ" className="flex">
                  <svg viewBox="0 0 7 7" className="h-[7px] w-[7px]"><path d="M.5.5h6v6h-6zM2 2l3 3M5 2L2 5" fill="none" stroke="#444" /></svg>
                </button>
              </div>
            </div>
            <div className="flex min-h-0 flex-1">
              <div className="relative flex flex-1 justify-center bg-[#f4f4f4] pt-[14px] pb-[13px]">
                <article className="flex w-80 items-center justify-center border border-[#333] bg-white shadow-[1px_1px_0_#777]">
                  <h1 className="pb-3 pl-[6px] text-center font-['Liberation_Sans',sans-serif] text-[46px] leading-[55px] font-bold text-[#f00]">
                    РАБОЧАЯ<br />ОБЛАСТЬ
                  </h1>
                </article>
                <div className="absolute top-[17px] left-[5px] flex flex-col gap-[2px]">
                  <SymbolPanel />
                  <AlignPanel />
                </div>
              </div>
              <div className="flex w-[10px] flex-col items-center justify-between border-l border-[#ddd] bg-[#f0f0f0] py-1 text-[#444]">
                <Down className="rotate-180" />
                <span className="h-[10px] w-[9px] border border-[#999] bg-gradient-to-r from-white to-[#ccc]" />
                <Down />
              </div>
            </div>
            <StatusBar />
          </div>
          <Dock />
        </div>
      </main>
      <Notes />
    </div>
  );
}
